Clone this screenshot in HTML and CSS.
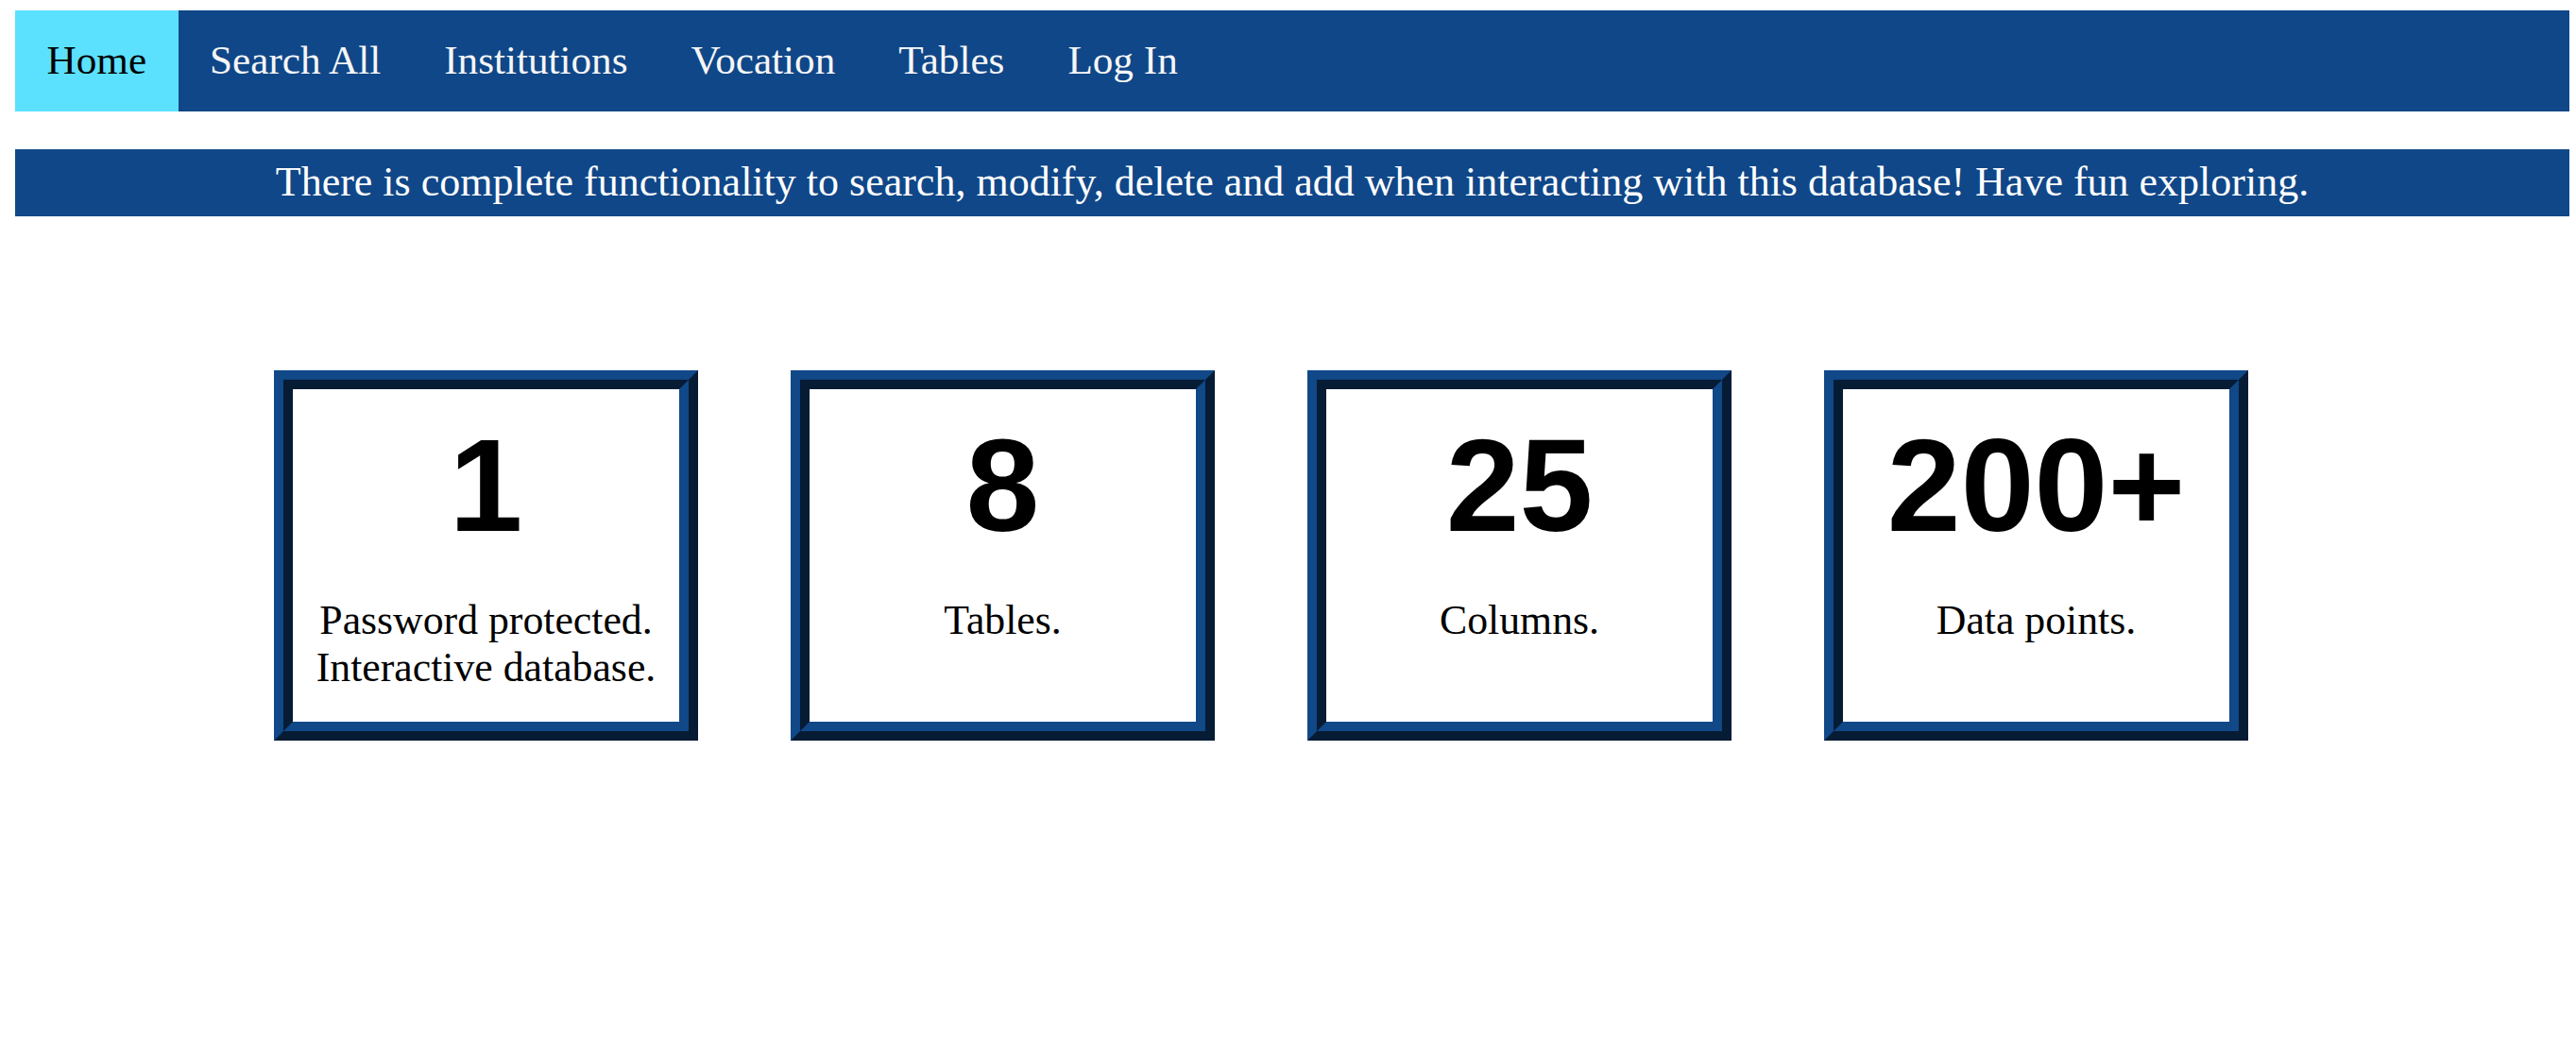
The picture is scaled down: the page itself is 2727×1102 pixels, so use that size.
FILE: index.html
```html
<!DOCTYPE html>
<html lang="en">
<head>
<meta charset="utf-8">
<title>Home</title>
<link rel="stylesheet" href="styles.css">
</head>
<body>
<nav class="topnav">
  <a class="nav-item active" href="#">Home</a>
  <a class="nav-item" href="#">Search All</a>
  <a class="nav-item" href="#">Institutions</a>
  <a class="nav-item" href="#">Vocation</a>
  <a class="nav-item" href="#">Tables</a>
  <a class="nav-item" href="#">Log In</a>
</nav>
<div class="banner">There is complete functionality to search, modify, delete and add when interacting with this database! Have fun exploring.</div>
<main class="stats">
  <div class="card">
    <div class="num">1</div>
    <div class="caption">Password protected.<br>Interactive database.</div>
  </div>
  <div class="card">
    <div class="num">8</div>
    <div class="caption">Tables.</div>
  </div>
  <div class="card">
    <div class="num">25</div>
    <div class="caption">Columns.</div>
  </div>
  <div class="card">
    <div class="num">200+</div>
    <div class="caption">Data points.</div>
  </div>
</main>
</body>
</html>
```
FILE: styles.css
```css
html, body {
  background: #ffffff;
}
body {
  margin: 11px 7px 0 16px;
  font-family: "Liberation Serif", "Times New Roman", serif;
  font-size: 43.75px;
  color: #000;
}
.topnav {
  display: flex;
  background: #104788;
}
.nav-item {
  display: block;
  padding: 28.25px 33.5px;
  font-size: 43.2px;
  line-height: 50.3px;
  color: #f6f6f6;
  text-decoration: none;
}
.nav-item.active {
  background: #5be1fe;
  color: #000;
}
.banner {
  margin-top: 40px;
  background: #104788;
  color: #ffffff;
  text-align: center;
  padding: 10px 0;
  font-size: 44px;
  line-height: 50.7px;
}
.stats {
  display: flex;
  gap: 98px;
  padding-left: 274px;
  margin-top: 163px;
}
.card {
  box-sizing: border-box;
  width: 449px;
  height: 392px;
  border: 20px ridge #104888;
  padding-top: 21px;
  text-align: center;
}
.num {
  font-family: "Liberation Sans", Arial, sans-serif;
  font-weight: bold;
  font-size: 140px;
  line-height: 161px;
}
.caption {
  margin-top: 37px;
  line-height: 50px;
}
```
